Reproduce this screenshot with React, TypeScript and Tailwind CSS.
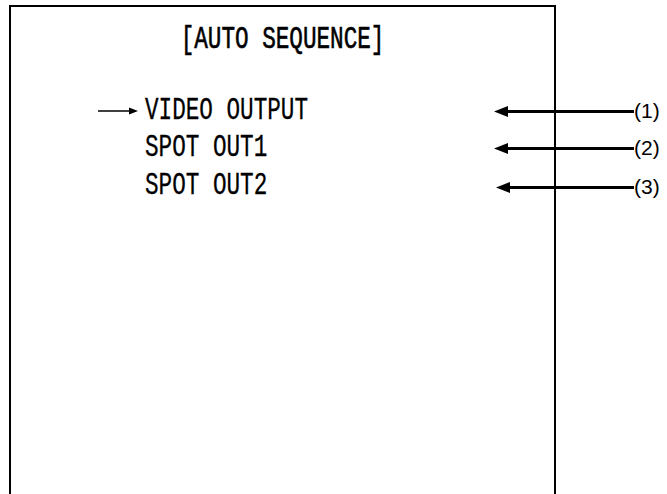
import React from "react";

const items = ["VIDEO OUTPUT", "SPOT OUT1", "SPOT OUT2"];

const callouts = [
  { label: "(1)", pos: "top-[99px] left-[494px]", line: "w-[126px]" },
  { label: "(2)", pos: "top-[136px] left-[494px]", line: "w-[126px]" },
  { label: "(3)", pos: "top-[175px] left-[496px]", line: "w-[124px]" },
];

const mono = { fontFamily: '"Liberation Mono", "DejaVu Sans Mono", monospace' };

const App = () => {
  return (
    <div className="relative w-[667px] h-[494px] overflow-hidden bg-white pl-[9px] pt-[5px]">
      {/* Screen frame */}
      <div className="w-[547px] h-[520px] border-2 border-black">
        <div className="pt-[14px] text-center text-[31px] leading-[38px] text-black" style={mono}>
          <span className="inline-block scale-x-[0.73] whitespace-pre [-webkit-text-stroke:0.6px_black]">
            [AUTO SEQUENCE]
          </span>
        </div>

        <div className="mt-[33px] flex flex-col">
          {items.map((item, i) => (
            <div key={i} className="flex items-center h-[37.5px]">
              <div className="w-[134px] flex justify-end pr-[7px]">
                {i === 0 && (
                  <svg width="40" height="10" viewBox="0 0 40 10">
                    <line x1="0" y1="5" x2="33" y2="5" stroke="black" strokeWidth="1.5" />
                    <polygon points="40,5 31,1.5 31,8.5" fill="black" />
                  </svg>
                )}
              </div>
              <span
                className="inline-block origin-left scale-x-[0.73] text-[31px] leading-[38px] text-black whitespace-pre [-webkit-text-stroke:0.3px_black]"
                style={mono}
              >
                {item}
              </span>
            </div>
          ))}
        </div>
      </div>

      {/* Callout arrows */}
      {callouts.map((c, i) => (
        <div key={i} className={`absolute ${c.pos} flex items-center h-[24px]`}>
          <svg width="14" height="11" viewBox="0 0 14 11" className="shrink-0">
            <polygon points="0,5.5 14,0 14,11" fill="black" />
          </svg>
          <div className={`${c.line} h-[3px] bg-black`} />
          <span
            className="text-[21px] leading-[24px] text-black"
            style={{ fontFamily: '"Liberation Sans", Arial, sans-serif' }}
          >
            {c.label}
          </span>
        </div>
      ))}
    </div>
  );
};

export default App;
